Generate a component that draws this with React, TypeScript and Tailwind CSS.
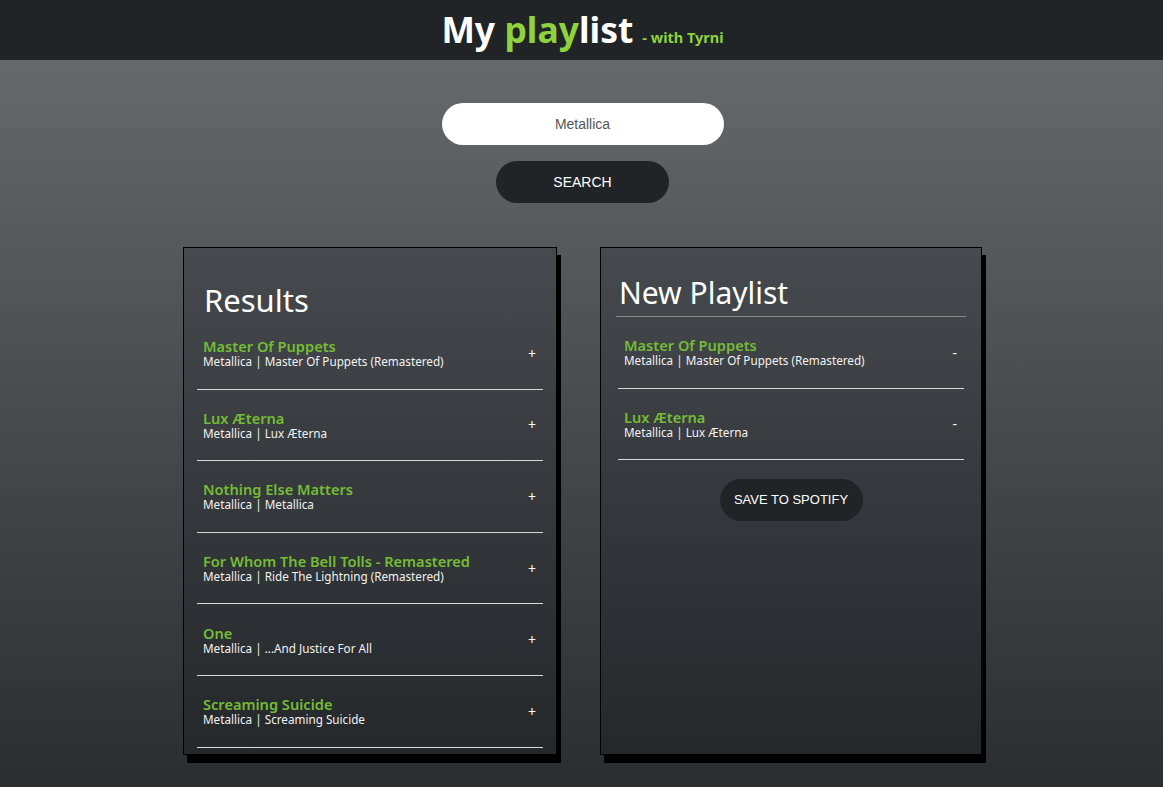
import React from 'react';

interface Track {
  name: string;
  artist: string;
  album: string;
}

const results: Track[] = [
  { name: 'Master Of Puppets', artist: 'Metallica', album: 'Master Of Puppets (Remastered)' },
  { name: 'Lux Æterna', artist: 'Metallica', album: 'Lux Æterna' },
  { name: 'Nothing Else Matters', artist: 'Metallica', album: 'Metallica' },
  { name: 'For Whom The Bell Tolls - Remastered', artist: 'Metallica', album: 'Ride The Lightning (Remastered)' },
  { name: 'One', artist: 'Metallica', album: '...And Justice For All' },
  { name: 'Screaming Suicide', artist: 'Metallica', album: 'Screaming Suicide' },
];

const playlist: Track[] = results.slice(0, 2);

const TrackRow: React.FC<{ track: Track; action: string }> = ({ track, action }) => (
  <div className="flex h-[71.6px] items-center justify-between border-b border-[#d8d8d8] px-[6px] pt-[1px]">
    <div className="flex flex-col">
      <span className="text-[14.6px] leading-[16px] font-semibold text-[#74bc36]">{track.name}</span>
      <span className="text-[11.7px] leading-[15px] text-[#f2f2f2]">
        {track.artist} | {track.album}
      </span>
    </div>
    <button className="mr-[1px] text-[14px] leading-none text-white">{action}</button>
  </div>
);

const App: React.FC = () => {
  return (
    <div className="min-h-screen bg-gradient-to-b from-[#6b6e71] to-[#2b2e31] font-['Noto_Sans',sans-serif]">
      {/* Header */}
      <header className="flex h-[60px] items-center justify-center bg-[#212427]">
        <h1 className="flex items-baseline pl-[2px] text-[35.5px] font-bold text-white">
          <span>
            My <span className="text-[#8ed23c]">play</span>list
          </span>
          <span className="ml-[9px] text-[14.5px] font-bold text-[#8ed23c]">- with Tyrni</span>
        </h1>
      </header>

      {/* Search */}
      <div className="flex flex-col items-center pt-[43px] pl-[2px]">
        <input
          defaultValue="Metallica"
          className="h-[42px] w-[282px] rounded-full bg-white text-center font-['Liberation_Sans',sans-serif] text-[14px] text-[#555] outline-none"
        />
        <button className="mt-[16px] h-[42px] w-[173px] rounded-full bg-[#212427] font-['Liberation_Sans',sans-serif] text-[14px] text-white">
          SEARCH
        </button>
      </div>

      {/* Panels */}
      <div className="flex justify-center gap-[43px] pt-[44px] pb-[25px] pl-[2px]">
        <section className="w-[374px] border border-black bg-gradient-to-b from-[#46494d] to-[#25282b] px-[13px] pb-[6px] shadow-[4px_8px_0_#000]">
          <h2 className="h-[70px] pt-[34px] pl-[7px] text-[31px] leading-[36px] text-white">Results</h2>
          {results.map((t) => (
            <TrackRow key={t.name} track={t} action="+" />
          ))}
        </section>

        <section className="flex w-[382px] flex-col border border-black bg-gradient-to-b from-[#46494d] to-[#25282b] px-[15px] shadow-[4px_8px_0_#000]">
          <h2 className="h-[69px] border-b border-[#8a8a8a] pt-[27px] pl-[3px] text-[30px] leading-[36px] text-white">
            New Playlist
          </h2>
          <div className="px-[2px]">
            {playlist.map((t) => (
              <TrackRow key={t.name} track={t} action="-" />
            ))}
          </div>
          <div className="flex justify-center pt-[19px]">
            <button className="h-[42px] w-[143px] rounded-full bg-[#212427] font-['Liberation_Sans',sans-serif] text-[13px] text-white">
              SAVE TO SPOTIFY
            </button>
          </div>
        </section>
      </div>
    </div>
  );
};

export default App;
